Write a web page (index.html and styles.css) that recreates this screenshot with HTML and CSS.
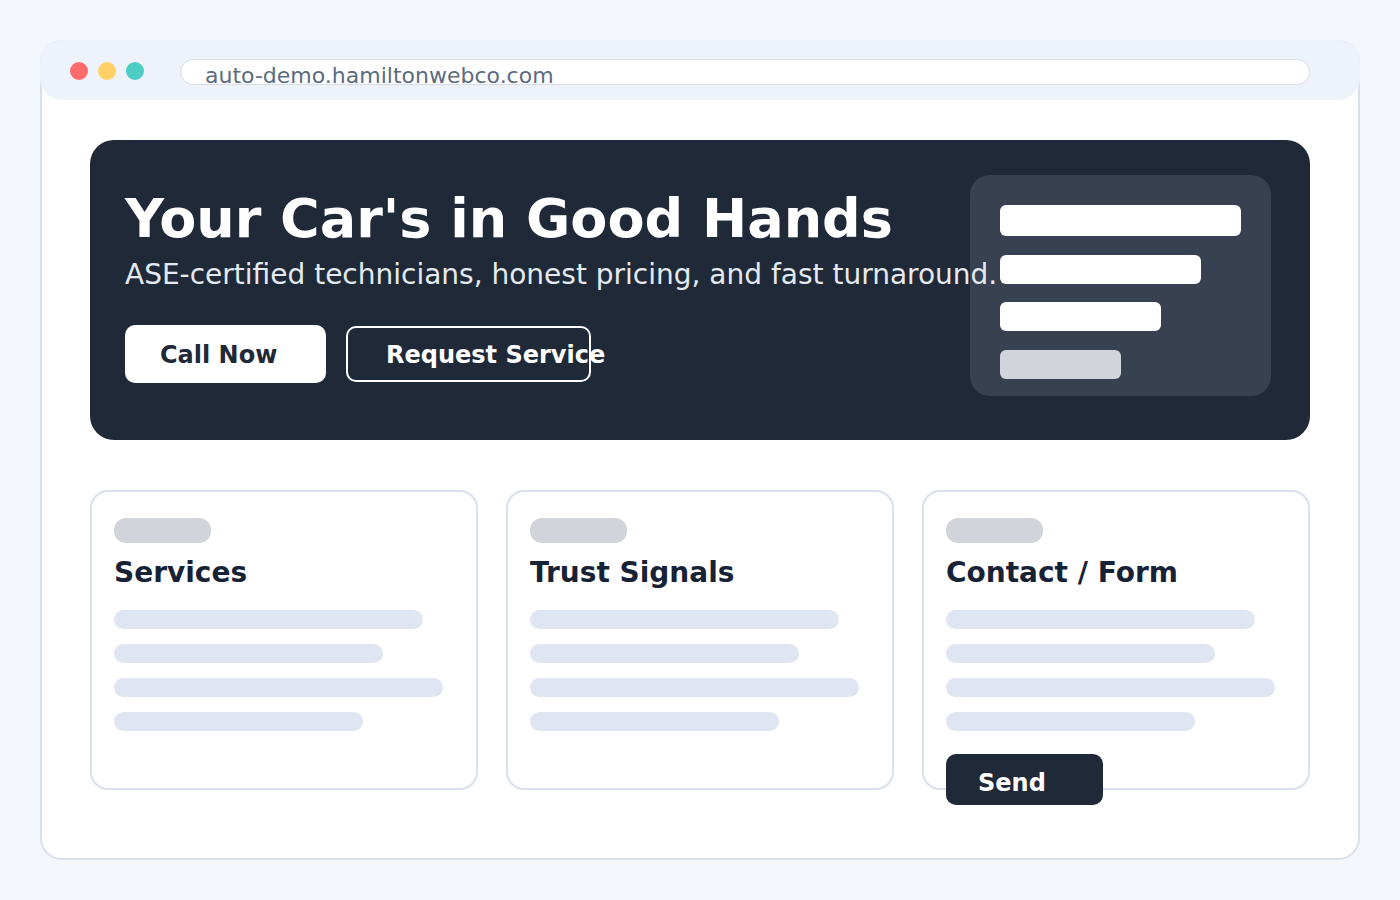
FILE: index.html
```html
<!DOCTYPE html>
<html lang="en">
<head>
<meta charset="utf-8">
<title>auto-demo.hamiltonwebco.com</title>
<link rel="stylesheet" href="styles.css">
</head>
<body>
<div class="window">
  <div class="topbar">
    <div class="dots">
      <span class="dot dot-red"></span>
      <span class="dot dot-yellow"></span>
      <span class="dot dot-teal"></span>
    </div>
    <div class="url">auto-demo.hamiltonwebco.com</div>
  </div>
  <main class="content">
    <section class="hero">
      <div class="hero-text">
        <h1 class="hero-title">Your Car's in Good Hands</h1>
        <p class="hero-sub">ASE-certified technicians, honest pricing, and fast turnaround.</p>
        <div class="hero-actions">
          <a class="btn btn-light">Call Now</a>
          <a class="btn btn-outline">Request Service</a>
        </div>
      </div>
      <div class="hero-panel">
        <span class="pbar pbar-1"></span>
        <span class="pbar pbar-2"></span>
        <span class="pbar pbar-3"></span>
        <span class="pbar pbar-4"></span>
      </div>
    </section>
    <section class="cards">
      <article class="card">
        <span class="pill"></span>
        <h2 class="card-title">Services</h2>
        <div class="lines">
          <span class="line line-1"></span>
          <span class="line line-2"></span>
          <span class="line line-3"></span>
          <span class="line line-4"></span>
        </div>
      </article>
      <article class="card">
        <span class="pill"></span>
        <h2 class="card-title">Trust Signals</h2>
        <div class="lines">
          <span class="line line-1"></span>
          <span class="line line-2"></span>
          <span class="line line-3"></span>
          <span class="line line-4"></span>
        </div>
      </article>
      <article class="card">
        <span class="pill"></span>
        <h2 class="card-title">Contact / Form</h2>
        <div class="lines">
          <span class="line line-1"></span>
          <span class="line line-2"></span>
          <span class="line line-3"></span>
          <span class="line line-4"></span>
        </div>
        <a class="btn btn-dark">Send</a>
      </article>
    </section>
  </main>
</div>
</body>
</html>
```
FILE: styles.css
```css
* { box-sizing: border-box; }
html, body { margin: 0; padding: 0; }
body {
  background: #f3f6fb;
  font-family: "DejaVu Sans", "Noto Sans", sans-serif;
  padding: 40px;
  width: 1400px;
  height: 900px;
  overflow: hidden;
}
.window {
  width: 1320px;
  height: 820px;
  background: #ffffff;
  border: 2px solid #d8e0eb;
  border-radius: 22px;
  position: relative;
}
.topbar {
  margin: -2px -2px 0;
  height: 60px;
  background: #edf2fb;
  border-radius: 22px;
  display: flex;
  align-items: center;
  padding-left: 30px;
  padding-right: 50px;
}
.dots { display: flex; gap: 10px; margin-top: 2px; flex-shrink: 0; }
.dot { width: 18px; height: 18px; border-radius: 50%; display: block; }
.dot-red { background: #ff6b6b; }
.dot-yellow { background: #ffd166; }
.dot-teal { background: #4ecdc4; }
.url {
  margin-left: 36px;
  flex: 1;
  height: 26px;
  margin-top: 3px;
  background: #ffffff;
  border: 1px solid #d3dce8;
  border-radius: 13px;
  padding-left: 24px;
  padding-top: 5px;
  font-size: 22px;
  line-height: 22px;
  color: #5b6b80;
  white-space: nowrap;
}
.content {
  padding: 40px 48px 0;
}
.hero {
  height: 300px;
  background: #1f2937;
  border-radius: 24px;
  display: flex;
  justify-content: space-between;
  padding: 35px 39px 0 35px;
}
.hero-text {
  position: relative;
  z-index: 1;
  width: 0;
  white-space: nowrap;
}
.hero-title {
  margin: 17px 0 0;
  font-size: 54px;
  line-height: 54px;
  font-weight: bold;
  color: #ffffff;
}
.hero-sub {
  margin: 15px 0 0;
  font-size: 28px;
  line-height: 28px;
  color: #e5e9f0;
}
.hero-actions {
  display: flex;
  align-items: flex-start;
  gap: 20px;
  margin-top: 36px;
}
.btn {
  display: block;
  flex-shrink: 0;
  font-weight: bold;
  font-size: 24px;
  line-height: 24px;
  border-radius: 10px;
  white-space: nowrap;
}
.btn-light {
  width: 201px;
  height: 58px;
  background: #ffffff;
  color: #1f2937;
  padding: 18px 0 0 35px;
}
.btn-outline {
  width: 245px;
  height: 56px;
  margin-top: 1px;
  border: 2px solid #ffffff;
  color: #ffffff;
  padding: 15px 0 0 38px;
  overflow: visible;
}
.hero-panel {
  width: 301px;
  height: 221px;
  background: #374151;
  border-radius: 20px;
  padding: 30px 30px 0;
  display: flex;
  flex-direction: column;
  flex-shrink: 0;
}
.pbar { display: block; flex-shrink: 0; background: #ffffff; border-radius: 6px; }
.pbar-1 { width: 241px; height: 31px; }
.pbar-2 { width: 201px; height: 29px; margin-top: 19px; }
.pbar-3 { width: 161px; height: 29px; margin-top: 18px; }
.pbar-4 { width: 121px; height: 29px; margin-top: 19px; background: #d1d5db; }
.cards {
  margin-top: 50px;
  display: grid;
  grid-template-columns: repeat(3, 1fr);
  gap: 28px;
}
.card {
  height: 300px;
  border: 2px solid #d8e0eb;
  border-radius: 18px;
  padding: 26px 22px 0;
  background: #ffffff;
}
.pill {
  display: block;
  width: 97px;
  height: 25px;
  border-radius: 12px;
  background: #d1d5db;
}
.card-title {
  margin: 16px 0 0;
  font-size: 28px;
  line-height: 28px;
  font-weight: bold;
  color: #172236;
}
.lines {
  margin-top: 23px;
  display: flex;
  flex-direction: column;
  gap: 15px;
}
.line { display: block; height: 19px; border-radius: 10px; background: #dfe6f1; }
.line-1 { width: 309px; }
.line-2 { width: 269px; }
.line-3 { width: 329px; }
.line-4 { width: 249px; }
.btn-dark {
  margin-top: 23px;
  width: 157px;
  height: 51px;
  background: #1f2937;
  color: #ffffff;
  padding: 17px 0 0 32px;
  position: relative;
}
```
